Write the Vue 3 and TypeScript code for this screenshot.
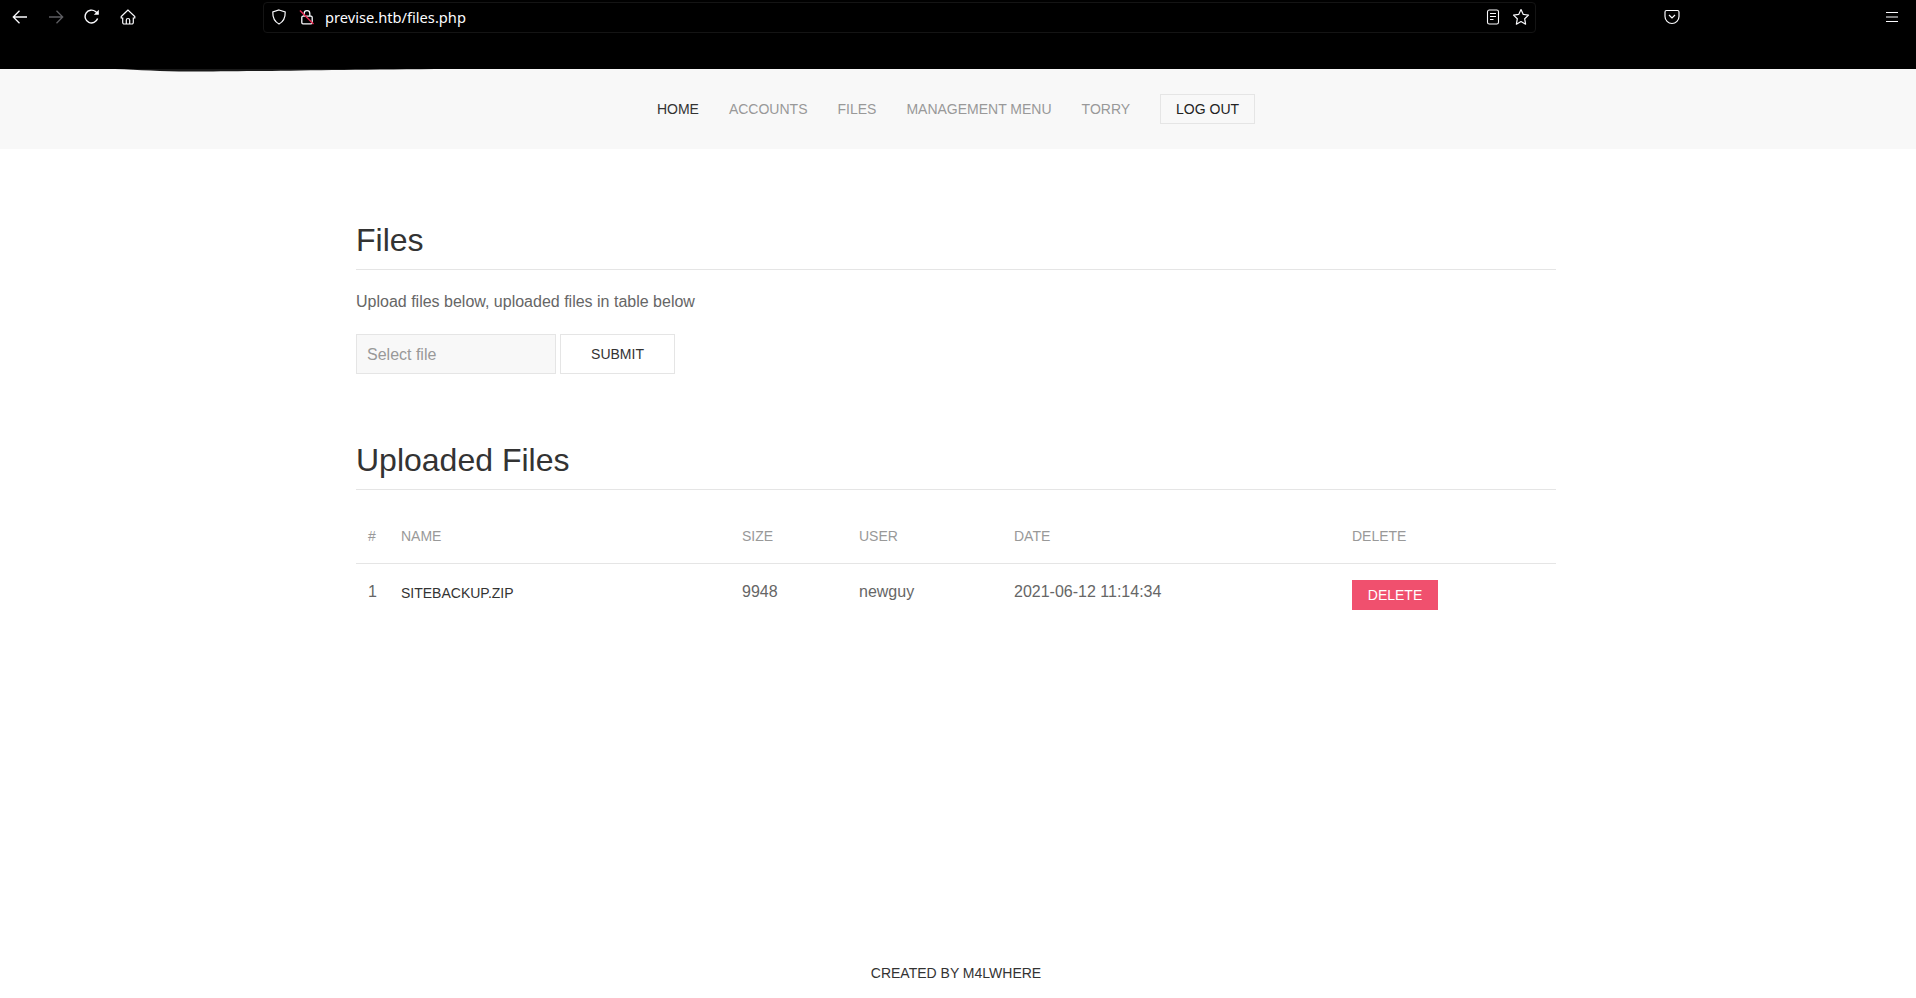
<template>
  <div class="page">
    <div class="browser">
      <div class="toolbar">
        <button class="tool" type="button" aria-label="Back">
          <svg width="16" height="16" viewBox="0 0 16 16" fill="none" stroke="#fbfbfe" stroke-width="1.3">
            <path d="M15 8H1.5M7.5 1.8 1.3 8l6.2 6.2" />
          </svg>
        </button>
        <button class="tool" type="button" aria-label="Forward">
          <svg width="16" height="16" viewBox="0 0 16 16" fill="none" stroke="#5e5e62" stroke-width="1.3">
            <path d="M1 8h13.5M8.500 1.800 14.700 8l-6.200 6.200" />
          </svg>
        </button>
        <button class="tool" type="button" aria-label="Reload">
          <svg width="16" height="16" viewBox="0 0 16 16" fill="none" stroke="#fbfbfe" stroke-width="1.4">
            <path d="M13.600 9.500A6.400 6.400 0 1 1 11.500 2.500L14 4.700" />
            <path d="M14.800.8v5h-5z" fill="#fbfbfe" stroke="none" />
          </svg>
        </button>
        <button class="tool home" type="button" aria-label="Home">
          <svg width="16" height="16" viewBox="0 0 16 16" fill="none" stroke="#fbfbfe" stroke-width="1.2">
            <path d="M8 1 1.200 7.500v1.500h1.500v4.500a1.500 1.500 0 0 0 1.500 1.500h7.600a1.500 1.500 0 0 0 1.500-1.500V9h1.500V7.500z" />
            <path d="M6.300 15v-3.800a1.700 1.700 0 0 1 3.400 0V15" />
          </svg>
        </button>
        <div class="urlbar">
          <svg class="shield" width="16" height="16" viewBox="0 0 16 16" fill="none" stroke="#fbfbfe" stroke-width="1.2">
            <path d="M8 1 14.200 3c.2 5.500-1.500 9.500-6.200 12C3.300 12.500 1.600 8.500 1.800 3z" />
          </svg>
          <svg class="lock" width="16" height="16" viewBox="0 0 16 16" fill="none">
            <path d="M5.200 7V4.500a2.800 2.800 0 0 1 5.600 0V7" stroke="#fbfbfe" stroke-width="1.3" />
            <rect x="2.800" y="7.200" width="10.400" height="7.600" rx="1.200" stroke="#fbfbfe" stroke-width="1.300" />
            <path d="M1 1.500 14.500 15" stroke="#e22850" stroke-width="1.500" />
          </svg>
          <span class="url">previse.htb/files.php</span>
          <svg class="reader" width="16" height="16" viewBox="0 0 16 16" fill="none" stroke="#fbfbfe" stroke-width="1.1">
            <rect x="2.500" y="1" width="11" height="14" rx="1.800" />
            <path d="M5 4.500h6M5 7.500h6M5 10.500h3.500" />
          </svg>
          <svg class="star" width="18" height="18" viewBox="0 0 18 18" fill="none" stroke="#fbfbfe" stroke-width="1.2">
            <path d="m9 1.500 2.300 4.900 5.200.7-3.800 3.700.9 5.400L9 13.600l-4.600 2.600.9-5.400-3.800-3.700 5.200-.7z" stroke-linejoin="round" />
          </svg>
        </div>
        <svg class="pocket" width="16" height="16" viewBox="0 0 16 16" fill="none" stroke="#fbfbfe" stroke-width="1.2">
          <path d="M2.500 1.500h11A1.500 1.500 0 0 1 15 3v4.500a7 7 0 0 1-14 0V3a1.500 1.500 0 0 1 1.500-1.500z" />
          <path d="M5 6l3 3 3-3" />
        </svg>
        <button class="tool menu" type="button" aria-label="Menu">
          <svg width="14" height="12" viewBox="0 0 14 12" stroke="#fbfbfe" stroke-width="1.200">
            <path d="M1 1.500h12M1 6h12M1 10.500h12" />
          </svg>
        </button>
      </div>
      <svg class="smudge" width="320" height="4" viewBox="0 0 320 4">
        <path d="M0 0C25 .8 45 2.600 75 2.600 130 2.600 200 1 320 0z" fill="#1a1a1a" />
      </svg>
    </div>

    <nav class="navbar">
      <a v-for="item in navItems" :key="item" class="nav-link" :class="{ active: item === 'Home' }" href="#">{{ item }}</a>
      <a class="logout" href="#">Log out</a>
    </nav>

    <main class="container">
      <h2 class="heading">Files</h2>
      <p class="lead">Upload files below, uploaded files in table below</p>
      <form class="upload" @submit.prevent>
        <div class="file-input">Select file</div>
        <button class="submit" type="submit">Submit</button>
      </form>

      <h2 class="heading second">Uploaded Files</h2>
      <table class="files">
        <colgroup>
          <col v-for="w in colWidths" :key="w" :style="{ width: w + 'px' }" />
        </colgroup>
        <thead>
          <tr>
            <th>#</th>
            <th>Name</th>
            <th>Size</th>
            <th>User</th>
            <th>Date</th>
            <th>Delete</th>
          </tr>
        </thead>
        <tbody>
          <tr v-for="(file, i) in uploads" :key="file.name">
            <td>{{ i + 1 }}</td>
            <td><a class="file-link" href="#">{{ file.name }}</a></td>
            <td>{{ file.size }}</td>
            <td>{{ file.user }}</td>
            <td>{{ file.date }}</td>
            <td><button class="delete" type="button">Delete</button></td>
          </tr>
        </tbody>
      </table>
    </main>

    <footer class="footer">Created by m4lwhere</footer>
  </div>
</template>

<script setup lang="ts">
const navItems = ["Home", "Accounts", "Files", "Management Menu", "Torry"];

const colWidths = [33, 341, 117, 155, 338, 216];

const uploads = [
  { name: "siteBackup.zip", size: 9948, user: "newguy", date: "2021-06-12 11:14:34" },
];
</script>

<style>
html,
body {
  margin: 0;
  background: #fff;
}
</style>

<style scoped>
.page {
  display: flex;
  flex-direction: column;
  height: 998px;
  overflow: hidden;
  font-family: "Liberation Sans", Arial, sans-serif;
  font-size: 16px;
  line-height: 24px;
  color: #666;
}

.browser {
  position: relative;
  height: 69px;
  background: #000;
}

.toolbar {
  display: flex;
  align-items: center;
  height: 34px;
  padding: 0 16px 0 2px;
}

.tool {
  display: flex;
  align-items: center;
  justify-content: center;
  width: 36px;
  height: 34px;
  padding: 0;
  border: none;
  background: transparent;
}

.home {
  padding-right: 1px;
}

.urlbar {
  display: flex;
  align-items: center;
  width: 1273px;
  height: 31px;
  margin-left: 117px;
  padding: 0 5px 0 7px;
  box-sizing: border-box;
  border: 1px solid #141414;
  border-radius: 4px;
}

.lock {
  margin-left: 12px;
}

.url {
  margin-left: 10px;
  font-family: "Noto Sans", "Open Sans", sans-serif;
  font-size: 14.67px;
  color: #fbfbfe;
}

.reader {
  margin-left: auto;
}

.star {
  margin-left: 11px;
}

.pocket {
  margin-left: 128px;
}

.menu {
  margin-left: auto;
  width: 16px;
}

.smudge {
  position: absolute;
  left: 115px;
  top: 69px;
}

.navbar {
  display: flex;
  align-items: center;
  justify-content: center;
  gap: 30px;
  height: 80px;
  padding-right: 4px;
  background: #f8f8f8;
}

.nav-link {
  font-size: 14px;
  color: #999;
  text-decoration: none;
  text-transform: uppercase;
}

.nav-link.active {
  color: #333;
}

.logout {
  padding: 0 15px;
  border: 1px solid #e5e5e5;
  font-size: 14px;
  line-height: 28px;
  color: #222;
  text-decoration: none;
  text-transform: uppercase;
}

.container {
  width: 1200px;
  margin-left: 356px;
  padding-top: 69px;
}

.heading {
  margin: 0;
  padding-bottom: 7px;
  border-bottom: 1px solid #e5e5e5;
  font-size: 32px;
  font-weight: 400;
  line-height: 44px;
  color: #333;
}

.lead {
  margin: 20px 0;
}

.upload {
  display: flex;
  gap: 4px;
}

.file-input {
  width: 200px;
  height: 40px;
  padding: 0 10px;
  box-sizing: border-box;
  border: 1px solid #e5e5e5;
  background: #f8f8f8;
  line-height: 39px;
  color: #999;
}

.submit {
  width: 115px;
  height: 40px;
  border: 1px solid #e5e5e5;
  background: #fff;
  font-family: inherit;
  font-size: 14px;
  color: #333;
  text-transform: uppercase;
}

.second {
  margin-top: 64px;
}

.files {
  width: 1200px;
  margin-top: 20px;
  table-layout: fixed;
  border-collapse: collapse;
}

th {
  padding: 16px 12px 17px;
  font-size: 14px;
  font-weight: 400;
  line-height: 20px;
  color: #999;
  text-align: left;
  text-transform: uppercase;
  border-bottom: 1px solid #e5e5e5;
}

td {
  padding: 16px 12px;
  vertical-align: top;
}

.file-link {
  position: relative;
  top: 1px;
  font-size: 14px;
  color: #333;
  text-decoration: none;
  text-transform: uppercase;
}

.delete {
  display: block;
  width: 86px;
  height: 30px;
  padding: 0;
  border: none;
  background: #f0506e;
  font-family: inherit;
  font-size: 14px;
  color: #fff;
  text-transform: uppercase;
}

.footer {
  margin-top: auto;
  padding-right: 4px;
  padding-bottom: 13px;
  font-size: 14px;
  color: #333;
  text-align: center;
  text-transform: uppercase;
}
</style>
